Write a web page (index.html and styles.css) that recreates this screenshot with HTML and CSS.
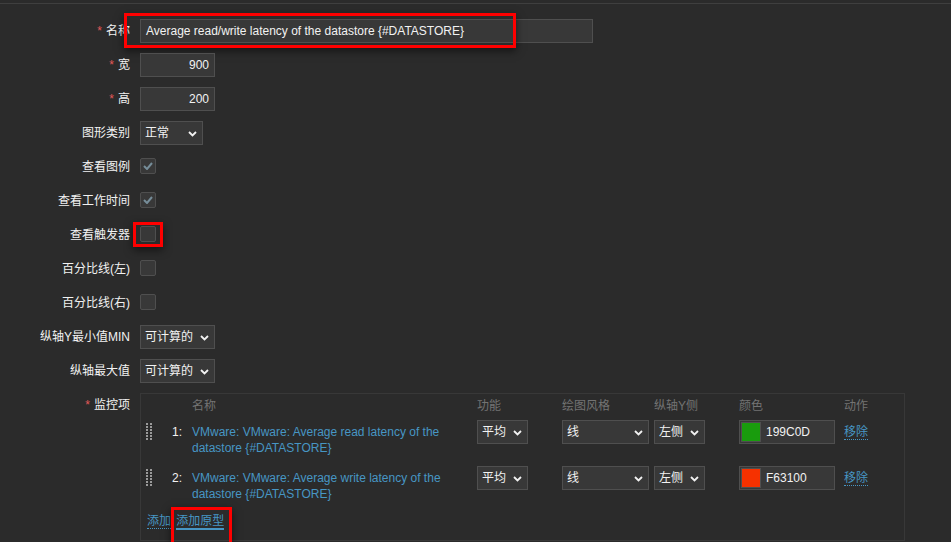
FILE: index.html
```html
<!DOCTYPE html>
<html lang="zh">
<head>
<meta charset="utf-8">
<link rel="stylesheet" href="styles.css">
</head>
<body>
<div class="topbar"></div>
<div class="form">
  <div class="lbl"><span class="ast">*</span>名称</div>
  <div class="ctl">
    <div class="input w-name">Average read/write latency of the datastore {#DATASTORE}</div>
    <div class="mark mark-name"></div>
  </div>

  <div class="lbl"><span class="ast">*</span>宽</div>
  <div class="ctl"><div class="input w-num num">900</div></div>

  <div class="lbl"><span class="ast">*</span>高</div>
  <div class="ctl"><div class="input w-num num">200</div></div>

  <div class="lbl">图形类别</div>
  <div class="ctl"><div class="select w-type"><span>正常</span><svg class="chev" width="9" height="6" viewBox="0 0 9 6"><path d="M1 1l3.5 3.5L8 1" fill="none" stroke="#f2f2f2" stroke-width="1.8"/></svg></div></div>

  <div class="lbl">查看图例</div>
  <div class="ctl"><div class="cb"><svg width="10" height="8" viewBox="0 0 10 8"><path d="M1 4l3 3 5-6" fill="none" stroke="#768d99" stroke-width="2"/></svg></div></div>

  <div class="lbl">查看工作时间</div>
  <div class="ctl"><div class="cb"><svg width="10" height="8" viewBox="0 0 10 8"><path d="M1 4l3 3 5-6" fill="none" stroke="#768d99" stroke-width="2"/></svg></div></div>

  <div class="lbl">查看触发器</div>
  <div class="ctl"><div class="cb"></div><div class="mark mark-cb"></div></div>

  <div class="lbl">百分比线(左)</div>
  <div class="ctl"><div class="cb"></div></div>

  <div class="lbl">百分比线(右)</div>
  <div class="ctl"><div class="cb"></div></div>

  <div class="lbl">纵轴Y最小值MIN</div>
  <div class="ctl"><div class="select w-calc"><span>可计算的</span><svg class="chev" width="9" height="6" viewBox="0 0 9 6"><path d="M1 1l3.5 3.5L8 1" fill="none" stroke="#f2f2f2" stroke-width="1.8"/></svg></div></div>

  <div class="lbl">纵轴最大值</div>
  <div class="ctl"><div class="select w-calc"><span>可计算的</span><svg class="chev" width="9" height="6" viewBox="0 0 9 6"><path d="M1 1l3.5 3.5L8 1" fill="none" stroke="#f2f2f2" stroke-width="1.8"/></svg></div></div>

  <div class="lbl"><span class="ast">*</span>监控项</div>
  <div class="ctl">
    <div class="items">
      <div class="grid head">
        <div></div><div></div><div>名称</div><div>功能</div><div>绘图风格</div><div>纵轴Y侧</div><div>颜色</div><div>动作</div>
      </div>
      <div class="grid item">
        <div class="drag"><svg width="6" height="18" viewBox="0 0 6 18"><g fill="#9a9a9a"><rect x="0" y="0" width="2" height="2"/><rect x="4" y="0" width="2" height="2"/><rect x="0" y="3" width="2" height="2"/><rect x="4" y="3" width="2" height="2"/><rect x="0" y="6" width="2" height="2"/><rect x="4" y="6" width="2" height="2"/><rect x="0" y="9" width="2" height="2"/><rect x="4" y="9" width="2" height="2"/><rect x="0" y="12" width="2" height="2"/><rect x="4" y="12" width="2" height="2"/><rect x="0" y="15" width="2" height="2"/><rect x="4" y="15" width="2" height="2"/></g></svg></div>
        <div class="no">1:</div>
        <div class="name"><a class="plain">VMware: VMware: Average read latency of the datastore {#DATASTORE}</a></div>
        <div><div class="select w-func"><span>平均</span><svg class="chev" width="9" height="6" viewBox="0 0 9 6"><path d="M1 1l3.5 3.5L8 1" fill="none" stroke="#f2f2f2" stroke-width="1.8"/></svg></div></div>
        <div><div class="select w-style"><span>线</span><svg class="chev" width="9" height="6" viewBox="0 0 9 6"><path d="M1 1l3.5 3.5L8 1" fill="none" stroke="#f2f2f2" stroke-width="1.8"/></svg></div></div>
        <div><div class="select w-side"><span>左侧</span><svg class="chev" width="9" height="6" viewBox="0 0 9 6"><path d="M1 1l3.5 3.5L8 1" fill="none" stroke="#f2f2f2" stroke-width="1.8"/></svg></div></div>
        <div><div class="color"><span class="sw sw-green"></span><span>199C0D</span></div></div>
        <div class="act"><a class="dotted">移除</a></div>
      </div>
      <div class="grid item">
        <div class="drag"><svg width="6" height="18" viewBox="0 0 6 18"><g fill="#9a9a9a"><rect x="0" y="0" width="2" height="2"/><rect x="4" y="0" width="2" height="2"/><rect x="0" y="3" width="2" height="2"/><rect x="4" y="3" width="2" height="2"/><rect x="0" y="6" width="2" height="2"/><rect x="4" y="6" width="2" height="2"/><rect x="0" y="9" width="2" height="2"/><rect x="4" y="9" width="2" height="2"/><rect x="0" y="12" width="2" height="2"/><rect x="4" y="12" width="2" height="2"/><rect x="0" y="15" width="2" height="2"/><rect x="4" y="15" width="2" height="2"/></g></svg></div>
        <div class="no">2:</div>
        <div class="name"><a class="plain">VMware: VMware: Average write latency of the datastore {#DATASTORE}</a></div>
        <div><div class="select w-func"><span>平均</span><svg class="chev" width="9" height="6" viewBox="0 0 9 6"><path d="M1 1l3.5 3.5L8 1" fill="none" stroke="#f2f2f2" stroke-width="1.8"/></svg></div></div>
        <div><div class="select w-style"><span>线</span><svg class="chev" width="9" height="6" viewBox="0 0 9 6"><path d="M1 1l3.5 3.5L8 1" fill="none" stroke="#f2f2f2" stroke-width="1.8"/></svg></div></div>
        <div><div class="select w-side"><span>左侧</span><svg class="chev" width="9" height="6" viewBox="0 0 9 6"><path d="M1 1l3.5 3.5L8 1" fill="none" stroke="#f2f2f2" stroke-width="1.8"/></svg></div></div>
        <div><div class="color"><span class="sw sw-red"></span><span>F63100</span></div></div>
        <div class="act"><a class="dotted">移除</a></div>
      </div>
      <div class="adds">
        <a class="dotted">添加</a>
        <span class="proto-wrap"><a class="solid">添加原型</a><span class="mark mark-proto"></span></span>
      </div>
    </div>
  </div>
</div>
</body>
</html>
```

FILE: styles.css
```css
html, body {
  margin: 0;
  padding: 0;
  background: #2b2b2b;
  height: 100%;
  overflow: hidden;
}
body {
  font-family: "Liberation Sans", Arial, "Noto Sans CJK SC", sans-serif;
  font-size: 12px;
  color: #f2f2f2;
}
.topbar {
  height: 3px;
  border-bottom: 1px solid #3f3f3f;
}
.form {
  display: grid;
  grid-template-columns: 130px 1fr;
  column-gap: 10px;
  row-gap: 10px;
  padding-top: 15px;
}
.lbl {
  text-align: right;
  line-height: 24px;
  height: 24px;
  white-space: nowrap;
}
.ast {
  color: #e45959;
  margin-right: 4px;
}
.ctl {
  position: relative;
  min-height: 24px;
}
.input, .select, .color {
  box-sizing: border-box;
  height: 24px;
  line-height: 22px;
  background: #383838;
  border: 1px solid #4f4f4f;
  padding: 0 5px;
  color: #f2f2f2;
  white-space: nowrap;
}
.w-name { width: 453px; }
.w-num { width: 75px; }
.num { text-align: right; }
.select {
  display: flex;
  align-items: center;
  justify-content: space-between;
  padding: 0 5px 0 4px;
}
.select .chev { flex: none; margin-top: 1px; }
.w-type { width: 63px; }
.w-calc { width: 75px; }
.w-func { width: 51px; }
.w-style { width: 87px; }
.w-side { width: 51px; }
.cb {
  box-sizing: border-box;
  width: 16px;
  height: 16px;
  margin-top: 3px;
  background: #383838;
  border: 1px solid #4f4f4f;
  border-radius: 2px;
  display: flex;
  align-items: center;
  justify-content: center;
}
.mark {
  position: absolute;
  box-sizing: border-box;
  border: 3px solid #ff0000;
  box-shadow: 0 3px 8px rgba(0, 0, 0, 0.55);
  pointer-events: none;
}
.mark-name {
  left: -16px;
  top: -6px;
  width: 392px;
  height: 35px;
}
.mark-cb {
  left: -7px;
  top: -1px;
  width: 30px;
  height: 25px;
}
.items {
  box-sizing: border-box;
  width: 765px;
  height: 148px;
  border: 1px solid #383838;
  padding: 2px 0 0 5px;
}
.grid {
  display: grid;
  grid-template-columns: 20px 26px 285px 85px 92px 85px 105px 1fr;
}
.head {
  color: #737373;
  line-height: 20px;
  height: 20px;
}
.item {
  padding: 4px 0 2px;
  align-items: start;
}
.drag {
  padding-top: 3px;
  height: 18px;
}
.no {
  text-align: right;
  padding-right: 10px;
  line-height: 16px;
  padding-top: 4px;
}
.name {
  line-height: 16px;
  padding: 4px 20px 4px 0;
}
a {
  color: #4796c4;
  text-decoration: none;
  cursor: pointer;
}
.act {
  line-height: 16px;
  padding-top: 4px;
}
.dotted { border-bottom: 1px dotted #4796c4; }
.solid { border-bottom: 2px solid #4796c4; }
.color {
  width: 96px;
  display: flex;
  align-items: center;
  padding: 0 0 0 1px;
}
.sw {
  box-sizing: border-box;
  width: 20px;
  height: 20px;
  border: 1px solid #4f4f4f;
  margin-right: 5px;
}
.sw-green { background: #199c0d; }
.sw-red { background: #f63100; }
.adds {
  line-height: 16px;
  padding-top: 5px;
  padding-left: 1px;
}
.proto-wrap {
  position: relative;
  margin-left: 2px;
}
.mark-proto {
  left: -5px;
  top: -7px;
  width: 61px;
  height: 40px;
}
```
